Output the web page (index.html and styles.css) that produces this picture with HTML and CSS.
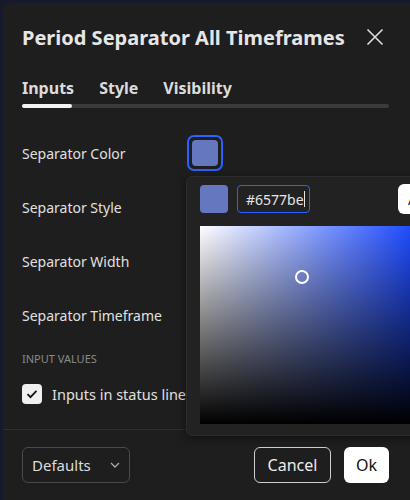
FILE: index.html
```html
<!DOCTYPE html>
<html lang="en">
<head>
  <meta charset="UTF-8">
  <title>Period Separator All Timeframes</title>
  <link rel="stylesheet" href="styles.css">
</head>
<body>
  <div class="dialog">
    <div class="header">
      <h2>Period Separator All Timeframes</h2>
      <button class="close-btn" aria-label="Close">
        <svg width="18" height="18" viewBox="0 0 18 18"><path d="M1.5 1.5l15 15M16.5 1.5l-15 15" stroke="#dcdcdc" stroke-width="1.6" fill="none"/></svg>
      </button>
    </div>

    <div class="tabs">
      <span class="tab active">Inputs</span>
      <span class="tab">Style</span>
      <span class="tab">Visibility</span>
    </div>
    <div class="tab-track"><div class="tab-bar"></div></div>

    <div class="content">
      <div class="row">
        <span class="label">Separator Color</span>
        <button class="swatch-btn"><span class="swatch"></span></button>
      </div>
      <div class="row"><span class="label">Separator Style</span></div>
      <div class="row"><span class="label">Separator Width</span></div>
      <div class="row"><span class="label">Separator Timeframe</span></div>

      <div class="section-title">INPUT VALUES</div>
      <label class="check-row">
        <span class="checkbox">
          <svg width="14" height="14" viewBox="0 0 14 14"><path d="M2.5 7.2l3 3 6-6.4" stroke="#131313" stroke-width="1.8" fill="none"/></svg>
        </span>
        <span>Inputs in status line</span>
      </label>
    </div>

    <div class="footer">
      <button class="select">Defaults
        <svg width="10" height="6" viewBox="0 0 10 6"><path d="M1 1l4 4 4-4" stroke="#a8a8a8" stroke-width="1.3" fill="none"/></svg>
      </button>
      <div class="actions">
        <button class="btn cancel">Cancel</button>
        <button class="btn ok">Ok</button>
      </div>
    </div>

    <div class="picker">
      <div class="picker-top">
        <span class="mini-swatch"></span>
        <div class="hex-input">#6577be<span class="caret"></span></div>
        <button class="add-btn">Add</button>
      </div>
      <div class="sat-box">
        <span class="sat-cursor"></span>
      </div>
    </div>
  </div>
</body>
</html>
```

FILE: styles.css
```css
body {
  margin: 0;
  height: 500px;
  overflow: hidden;
  background: #171a2b;
  font-family: 'Noto Sans', 'Open Sans', sans-serif;
  color: #e0e0e0;
}
button {
  font-family: inherit;
  cursor: pointer;
}
.dialog {
  position: relative;
  margin: 3px 0 0 3px;
  width: 430px;
  height: 520px;
  background: #1e1e1e;
  border-radius: 8px 0 0 0;
}
.header {
  display: flex;
  align-items: center;
  justify-content: space-between;
  width: 366px;
  height: 40px;
  padding: 14px 0 0 19px;
}
.header h2 {
  margin: 0;
  font-size: 20px;
  font-weight: 700;
  color: #e6e6e6;
}
.close-btn {
  display: flex;
  background: none;
  border: 0;
  padding: 0;
  margin-right: 4px;
}
.tabs {
  display: flex;
  gap: 25px;
  padding: 21px 0 0 19px;
  height: 20px;
}
.tab {
  font-size: 16px;
  font-weight: 700;
  line-height: 20px;
  color: #dcdcdc;
}
.tab-track {
  margin: 6px 0 0 19px;
  width: 367px;
  height: 4px;
  border-radius: 2px;
  background: #3b3b3b;
}
.tab-bar {
  width: 50px;
  height: 4px;
  border-radius: 2px;
  background: #f2f2f2;
}
.content {
  padding: 18px 0 0 19px;
  border-bottom: 1px solid #2e2e2e;
  padding-bottom: 25px;
}
.row {
  display: flex;
  align-items: center;
  height: 54px;
}
.label {
  width: 165px;
  font-size: 14px;
}
.swatch-btn {
  display: flex;
  width: 36px;
  height: 36px;
  padding: 3px;
  background: #1e1e1e;
  border: 2px solid #2962ff;
  border-radius: 7px;
}
.swatch {
  flex: 1;
  background: #6577be;
  border-radius: 4px;
}
.section-title {
  margin-top: 9px;
  font-size: 11px;
  line-height: 16px;
  color: #8a8a8a;
}
.check-row {
  display: flex;
  align-items: center;
  gap: 10px;
  margin-top: 17px;
  font-size: 14.5px;
}
.checkbox {
  display: flex;
  align-items: center;
  justify-content: center;
  width: 20px;
  height: 20px;
  background: #f0f0f0;
  border-radius: 4px;
}
.footer {
  display: flex;
  justify-content: space-between;
  width: 367px;
  padding: 17px 0 0 19px;
}
.select {
  display: flex;
  align-items: center;
  justify-content: space-between;
  width: 108px;
  height: 36px;
  padding: 0 9px 0 9px;
  background: none;
  border: 1px solid #4a4a4a;
  border-radius: 6px;
  color: #dcdcdc;
  font-size: 15px;
}
.actions {
  display: flex;
  gap: 13px;
}
.btn {
  height: 36px;
  border-radius: 6px;
  font-size: 16px;
}
.cancel {
  width: 77px;
  background: none;
  border: 1px solid #cfcfcf;
  color: #ececec;
}
.ok {
  width: 45px;
  background: #fff;
  border: 0;
  color: #111;
}

/* colour picker popover */
.picker {
  position: absolute;
  left: 183px;
  top: 173px;
  width: 260px;
  padding: 8px 0 11px 13px;
  background: #222;
  border: 1px solid #2c2c2c;
  border-radius: 6px;
  box-shadow: 0 2px 10px rgba(0, 0, 0, 0.5);
}
.picker-top {
  display: flex;
  align-items: center;
  height: 28px;
}
.mini-swatch {
  width: 28px;
  height: 28px;
  border-radius: 4px;
  background: #6577be;
}
.hex-input {
  display: flex;
  align-items: center;
  margin-left: 9px;
  width: 63px;
  height: 26px;
  padding-left: 8px;
  border: 1px solid #2962ff;
  border-radius: 4px;
  font-size: 14px;
  color: #e6e6e6;
}
.caret {
  width: 1px;
  height: 16px;
  background: #e6e6e6;
}
.add-btn {
  margin-left: 88px;
  height: 30px;
  padding: 0 10px;
  background: #fff;
  border: 0;
  border-radius: 6px;
  font-size: 14px;
  color: #111;
}
.sat-box {
  position: relative;
  margin-top: 13px;
  width: 240px;
  height: 198px;
  background: linear-gradient(to top, #000, rgba(0, 0, 0, 0)),
    linear-gradient(to right, #fff, #0033ff);
}
.sat-cursor {
  position: absolute;
  left: 95px;
  top: 44px;
  width: 10px;
  height: 10px;
  border: 2px solid #fff;
  border-radius: 50%;
}
```
